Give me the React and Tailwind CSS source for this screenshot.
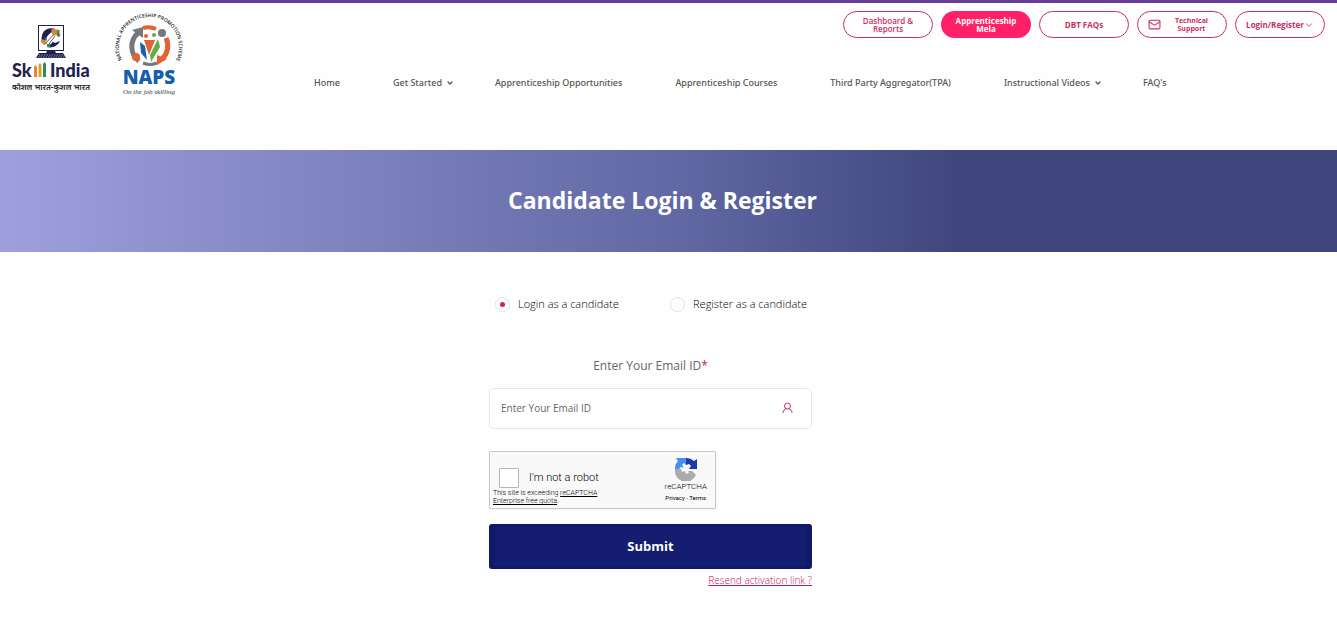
import { ChevronDown, Mail } from "lucide-react";

const navLinks = [
  { label: "Home" },
  { label: "Get Started", menu: true },
  { label: "Apprenticeship Opportunities" },
  { label: "Apprenticeship Courses" },
  { label: "Third Party Aggregator(TPA)" },
  { label: "Instructional Videos", menu: true },
  { label: "FAQ's" },
];

const pill =
  "flex h-[27px] w-[90px] items-center justify-center rounded-full border border-[#c9305f] text-center text-[8px] leading-[8px] text-[#c9305f]";

function SkillIndiaLogo() {
  return (
    <a href="#home" aria-label="Skill India">
      <svg width="84" height="72" viewBox="0 0 84 72">
        <rect x="26.500" y="2.500" width="25" height="25" fill="#fff" stroke="#1f2050" />
        <path d="M43 6A9.500 9.500 0 1 0 48 18L43 20 38 17 45 10z" fill="#1f2050" />
        <path d="M32 21c1-6 5-11 10-13l3 3-5 9-5 4z" fill="#fff" />
        <path d="M34 20l8-9M37 21l6-8M35 15l-3 2" stroke="#1f2050" strokeWidth="0.7" />
        <path d="M39 7l3-2 1 2 3-1 1 4 2 1-2 3-3-2-3 1-1-3z" fill="#d9833c" />
        <path d="M45 8l3-1-1 4 1 3-3-1z" fill="#2f8a54" />
        <path d="M29 16l4 1 2 4-3 1-3-3z" fill="#d9833c" />
        <path d="M32 14l3 2-1 3zM35 21l3 0 1 4-4-1z" fill="#2f8a54" />
        <path d="M35 28h8l1 2H34z" fill="#1f2050" />
        <path d="M27 30h24l3 5H24z" fill="#1f2050" />
        <path d="M27 32h25M26 34h27" stroke="#fff" strokeWidth="0.5" strokeDasharray="1.500 1" />
        <text x="0" y="54" fontSize="18" fontWeight="900" fill="#22204d" className="font-['Lato',sans-serif]">
          Sk
        </text>
        <path d="M22 54V44l1.500-2 1.500 2v10z" fill="#e8872f" />
        <path d="M26.500 54V42l1.500-2 1.500 2v12z" fill="#d3a32d" />
        <path d="M31 54V41l1.500-2 1.500 2v13z" fill="#2f8a54" />
        <text x="38" y="54" fontSize="18" fontWeight="900" fill="#22204d" className="font-['Lato',sans-serif]">
          India
        </text>
        <text x="0" y="67" fontSize="8" fontWeight="600" fill="#222" className="font-['Noto_Sans',sans-serif]">
          कौशल भारत-कुशल भारत
        </text>
      </svg>
    </a>
  );
}

function NapsLogo() {
  return (
    <a href="#naps" aria-label="National Apprenticeship Promotion Scheme">
      <svg width="74" height="88" viewBox="0 0 74 88">
        <defs>
          <path id="ring" d="M10 49A30 30 0 1 1 64 49" />
        </defs>
        <text fontSize="5" fontWeight="600" fill="#222" className="font-['Open_Sans',sans-serif]">
          <textPath href="#ring">NATIONAL APPRENTICESHIP PROMOTION SCHEME</textPath>
        </text>
        <path d="M27 50A18 18 0 0 1 26 22" fill="none" stroke="#77787b" strokeWidth="5" />
        <path d="M20 19l11-3v11z" fill="#77787b" />
        <path d="M31 17A18 18 0 0 1 44 18" fill="none" stroke="#e2632f" strokeWidth="4" />
        <path d="M54 27A18 18 0 0 1 50 48" fill="none" stroke="#e2632f" strokeWidth="5" />
        <path d="M45 44l10 4-10 6z" fill="#e2632f" />
        <path d="M45 52A18 18 0 0 1 31 52" fill="none" stroke="#77787b" strokeWidth="3" />
        <circle cx="50" cy="22" r="4" fill="#77787b" />
        <circle cx="24" cy="46" r="4" fill="#e2632f" />
        <circle cx="34" cy="25" r="2" fill="#e2632f" />
        <circle cx="42" cy="24" r="2" fill="#62ad45" />
        <path d="M28 31l5 4 2 14-6-7z" fill="#1b60a8" />
        <path d="M32 29h11l-6 15z" fill="#e2632f" />
        <path d="M46 28l2 8-9 15-1-7z" fill="#62ad45" />
        <text x="37" y="73" textAnchor="middle" fontSize="19" fontWeight="800" fill="#165fa9" className="font-['Open_Sans',sans-serif]">
          NAPS
        </text>
        <text x="37" y="83" textAnchor="middle" fontSize="7" fontStyle="italic" fill="#333" className="font-['Liberation_Serif',serif]">
          On the job skilling
        </text>
      </svg>
    </a>
  );
}

function Header() {
  return (
    <header className="flex h-[150px] items-start border-t-3 border-[#663e98] pl-3">
      <div className="flex gap-4 pt-2">
        <div className="pt-3">
          <SkillIndiaLogo />
        </div>
        <NapsLogo />
      </div>
      <div className="flex-1">
        <div className="flex justify-end gap-2 pt-2 pr-3">
          <a href="#reports" className={`${pill} font-semibold`}>
            Dashboard &<br />
            Reports
          </a>
          <a
            href="#mela"
            className="flex h-[27px] w-[90px] items-center justify-center rounded-full bg-[#ff2068] text-center text-[8px] leading-[8px] font-bold text-white"
          >
            Apprenticeship
            <br />
            Mela
          </a>
          <a href="#faqs" className={`${pill} font-bold`}>
            DBT FAQs
          </a>
          <a
            href="#support"
            className="flex h-[27px] w-[90px] items-center justify-between rounded-full border border-[#c9305f] pr-[18px] pl-[10px] text-center text-[7px] leading-[8px] font-bold text-[#c9305f]"
          >
            <Mail size={13} strokeWidth={2} />
            <span>
              Technical
              <br />
              Support
            </span>
          </a>
          <button type="button" className={`${pill} font-bold`}>
            Login/Register
            <ChevronDown size={10} strokeWidth={2} className="shrink-0" />
          </button>
        </div>
        <nav className="flex gap-[53px] pt-[38px] pl-[128px] font-['Noto_Sans',sans-serif] text-[9px] leading-[14px] font-medium whitespace-nowrap text-[#555]">
          {navLinks.map((link) => (
            <a key={link.label} href="#nav" className="flex items-center gap-1">
              {link.label}
              {link.menu && <ChevronDown size={8} strokeWidth={4} className="-mr-3" />}
            </a>
          ))}
        </nav>
      </div>
    </header>
  );
}

function RecaptchaIcon() {
  return (
    <svg width="24" height="24" viewBox="0 0 24 24">
      <path d="M1 12A11 11 0 0 1 4 4L2 1h10v7l-2-2-2 2 2 3-3-1-2 2z" fill="#4a8df0" />
      <path d="M12 1a11 11 0 0 1 8 3l3-2v10h-8l2-3-2-2-3 1z" fill="#1c3aa9" />
      <path d="M1 12h6l1 3 3-1 1 3 3-1-1-2h4l4 4A11 11 0 0 1 1 12z" fill="#ababab" />
    </svg>
  );
}

function Captcha() {
  return (
    <div className="flex h-[58px] w-[227px] justify-between rounded-[1px] border border-[#c8c8c8] bg-[#f9f9f9] pr-2 pl-[3px] font-['Roboto',sans-serif] font-light text-black shadow-xs">
      <div className="pt-4">
        <label className="flex items-center gap-[10px] pl-[6px] text-[11px] leading-5">
          <input type="checkbox" className="size-5 appearance-none rounded-[1px] border border-[#b5b5b5] bg-white" />
          I'm not a robot
        </label>
        <p className="pt-px text-[7px] leading-[8px]">
          This site is exceeding{" "}
          <a href="#quota" className="underline">
            reCAPTCHA
            <br />
            Enterprise free quota
          </a>
          .
        </p>
      </div>
      <div className="flex flex-col items-center pt-[5px]">
        <RecaptchaIcon />
        <span className="pt-px text-[8px] leading-[10px]">reCAPTCHA</span>
        <span className="pt-[2px] text-[6px] leading-[8px] font-normal">
          <a href="#privacy">Privacy</a> - <a href="#terms">Terms</a>
        </span>
      </div>
    </div>
  );
}

function RoleRadio({ label, defaultChecked }) {
  return (
    <label className="flex items-center gap-2 text-[11px] leading-4 font-light text-black">
      <input
        type="radio"
        name="role"
        defaultChecked={defaultChecked}
        className="grid size-[15px] appearance-none place-items-center rounded-full border border-[#e3dfe6] before:size-[5px] before:rounded-full checked:before:bg-[#cf2457]"
      />
      {label}
    </label>
  );
}

function LoginForm() {
  return (
    <form className="mx-auto w-[323px] pt-11">
      <div className="flex justify-between pr-[5px] pl-[6px]">
        <RoleRadio label="Login as a candidate" defaultChecked />
        <RoleRadio label="Register as a candidate" />
      </div>
      <label htmlFor="email" className="block pt-[45px] text-center text-[12px] leading-[18px] text-[#666]">
        Enter Your Email ID<span className="text-[#d01c2a]">*</span>
      </label>
      <div className="mt-[13px] flex h-[41px] items-center rounded-[5px] border border-[#e8e8ec] bg-white pr-[18px] pb-px pl-[11px]">
        <input
          id="email"
          type="email"
          placeholder="Enter Your Email ID"
          className="min-w-0 flex-1 text-[10px] leading-4 outline-none placeholder:text-[#666]"
        />
        <svg width="11" height="12" viewBox="0 0 11 12" fill="none" stroke="#c9305f">
          <circle cx="5.500" cy="4" r="3" />
          <path d="M1 11c0-2.500 1.500-4 3.500-4.300M10 11c0-2.500-1.500-4-3.500-4.300" />
        </svg>
      </div>
      <div className="pt-[22px]">
        <Captcha />
      </div>
      <button
        type="button"
        className="mt-[15px] h-[45px] w-full rounded-[3px] border-x-6 border-y-3 border-[#10186a] bg-[#151d70] text-[13px] font-bold text-white"
      >
        Submit
      </button>
      <a href="#resend" className="block pt-1 text-right text-[10px] leading-[14px] font-light text-[#c2184c] underline">
        Resend activation link ?
      </a>
    </form>
  );
}

export default function App() {
  return (
    <div className="min-h-screen bg-[#fefefe] font-['Open_Sans',sans-serif]">
      <Header />
      <main>
        <div className="flex h-[102px] items-center justify-center bg-linear-to-r from-[#9f9fde] via-[#6269a4] via-50% to-[#40467d] to-72% pr-3 pb-[2px]">
          <h1 className="text-[23px] leading-8 font-bold text-white">Candidate Login & Register</h1>
        </div>
        <div className="pr-9">
          <LoginForm />
        </div>
      </main>
    </div>
  );
}
